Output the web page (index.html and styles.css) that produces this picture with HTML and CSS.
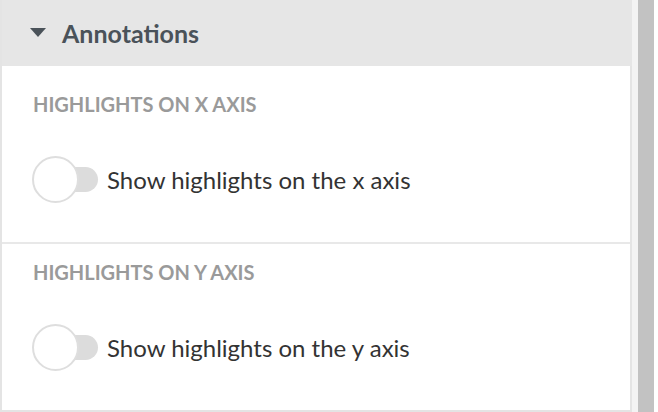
FILE: index.html
```html
<!DOCTYPE html>
<html>
<head>
<meta charset="utf-8">
<link rel="stylesheet" href="styles.css">
</head>
<body>
<div class="layout">
  <div class="panel">
    <div class="panel-header">
      <svg class="caret" width="16" height="9" viewBox="0 0 16 9"><polygon points="0,0 16,0 8,9" fill="#4a5259"/></svg>
      <span class="panel-title">Annotations</span>
    </div>
    <div class="section first">
      <div class="section-label">Highlights on X axis</div>
      <label class="toggle-row">
        <span class="toggle"><span class="track"></span><span class="knob"></span></span>
        <span class="toggle-text">Show highlights on the x axis</span>
      </label>
    </div>
    <div class="section">
      <div class="section-label">Highlights on Y axis</div>
      <label class="toggle-row">
        <span class="toggle"><span class="track"></span><span class="knob"></span></span>
        <span class="toggle-text">Show highlights on the y axis</span>
      </label>
    </div>
  </div>
  <div class="gutter"></div>
  <div class="scrollbar"></div>
  <div class="edge"></div>
</div>
</body>
</html>
```
FILE: styles.css
```css
* { box-sizing: border-box; }
html, body { margin: 0; padding: 0; background: #fff; }
body { font-family: "Lato", "Open Sans", sans-serif; }
.layout { display: flex; height: 412px; }
.panel {
  width: 632px;
  border-left: 2px solid #e4e4e4;
  border-right: 2px solid #e4e4e4;
  border-bottom: 2px solid #e4e4e4;
  display: flex;
  flex-direction: column;
  height: 412px;
}
.panel-header {
  height: 66px;
  background: #e6e6e6;
  display: flex;
  align-items: center;
  padding-left: 28px;
  margin: 0 -2px 0 0;
}
.caret { margin-right: 16px; margin-top: -1px; }
.panel-title { font-size: 25px; line-height: 30px; font-weight: 700; color: #4a5259; }
.section { padding: 18px 0 39px 31px; border-top: 2px solid #e8e8e8; flex: none; }
.section.first { border-top: none; padding-top: 28px; }
.section-label {
  font-size: 20px; font-weight: 700; color: #9a9a9a; text-transform: uppercase;
  line-height: 20px; height: 20px;
}
.toggle-row { display: flex; align-items: center; margin-top: 42px; }
.toggle { position: relative; width: 66px; height: 47px; flex: none; margin-left: -1px; }
.track { position: absolute; left: 24px; right: 0; top: 11px; height: 25px; border-radius: 13px; background: #dcdcdc; }
.knob { position: absolute; left: 0; top: 0; width: 47px; height: 47px; border-radius: 50%; background: #fff; border: 2px solid #dedede; }
.toggle-text { margin-left: 9px; font-size: 24px; line-height: 30px; color: #333; }
.gutter { width: 6px; background: #f3f3f3; }
.scrollbar { width: 16px; background: #c2c2c2; }
.edge { flex: 1; background: #fff; }
```
